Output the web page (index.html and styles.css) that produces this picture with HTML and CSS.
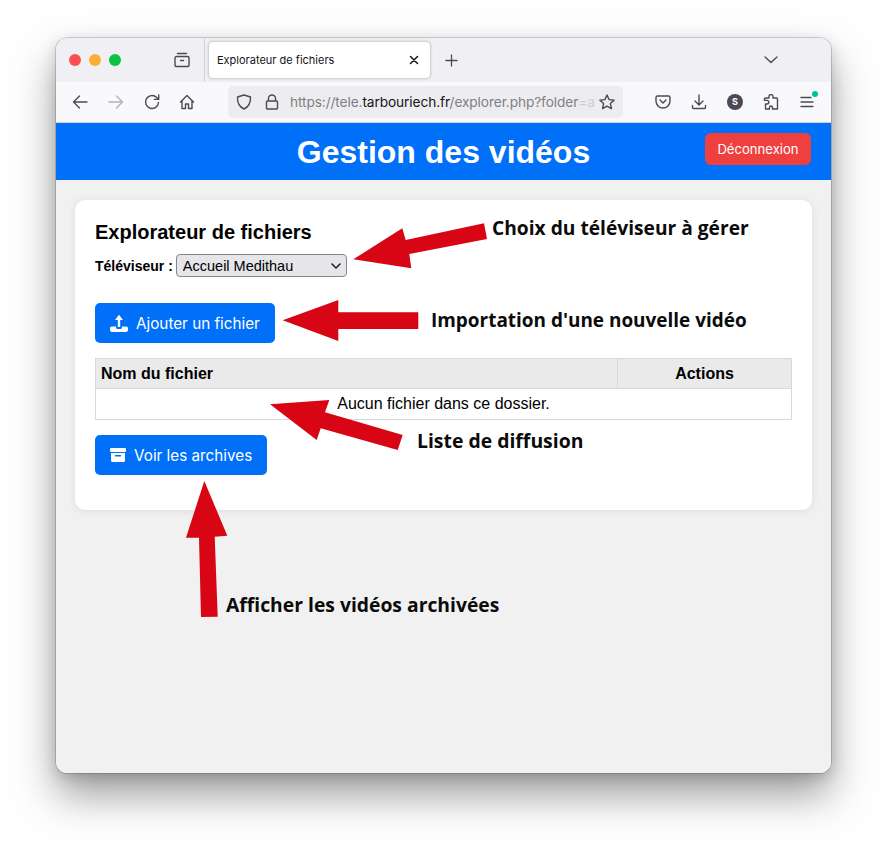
FILE: index.html
```html
<!DOCTYPE html>
<html lang="fr">
<head>
<meta charset="utf-8">
<title>Explorateur de fichiers</title>
<link rel="stylesheet" href="styles.css">
</head>
<body>
<div class="window">
  <div class="tabbar">
    <div class="lights"><span class="light red"></span><span class="light yellow"></span><span class="light green"></span></div>
    <svg class="ico tabs-ico" viewBox="0 0 16 16"><path d="M3.500 1.500h9M1 6a1.500 1.500 0 0 1 1.500-1.500h11A1.500 1.500 0 0 1 15 6v7.500a1 1 0 0 1-1 1H2a1 1 0 0 1-1-1zM6.500 8.500h3"/></svg>
    <div class="tab-sep"></div>
    <div class="tab"><span class="tab-title">Explorateur de fichiers</span>
      <svg class="ico tab-close" viewBox="0 0 10 10"><path d="M1.500 1.500l7 7M8.500 1.500l-7 7"/></svg>
    </div>
    <svg class="ico newtab" viewBox="0 0 14 14"><path d="M7 1v12M1 7h12"/></svg>
    <svg class="ico chevron" viewBox="0 0 14 8"><path d="M1 1l6 5.500L13 1"/></svg>
  </div>
  <div class="navbar">
    <svg class="ico nav-ico" viewBox="0 0 16 16"><path d="M15 8H1.500M7.500 2L1.500 8l6 6"/></svg>
    <svg class="ico nav-ico dim" viewBox="0 0 16 16"><path d="M1 8h13.500M8.500 2l6 6-6 6"/></svg>
    <svg class="ico nav-ico" viewBox="0 0 16 16"><path d="M14.500 8.500A6.500 6.500 0 1 1 12.500 3.300L14.500 5.200M14.700 1v4.400h-4.400"/></svg>
    <svg class="ico nav-ico home" viewBox="0 0 16 16"><path d="M1.500 8L8 1.500 14.500 8M3 6.800v7.700h3.500v-4.500h3v4.500H13V6.800"/></svg>
    <div class="urlbar">
      <svg class="ico shield" viewBox="0 0 16 16"><path d="M8 1l6.500 2c.3 5.500-1.800 9.800-6.500 12C3.300 12.800 1.200 8.500 1.500 3z"/></svg>
      <svg class="ico lock" viewBox="0 0 14 16"><path d="M3.500 7V4.500a3.500 3.500 0 0 1 7 0V7M2.500 7h9a1 1 0 0 1 1 1v6a1 1 0 0 1-1 1h-9a1 1 0 0 1-1-1V8a1 1 0 0 1 1-1z"/></svg>
      <span class="url"><span class="url-dim">https://tele.</span>tarbouriech.fr<span class="url-dim">/explorer.php?folder</span><span class="url-fade">=a</span></span>
      <svg class="ico star" viewBox="0 0 16 16"><path d="M8 1l2.100 4.600 5 .6-3.700 3.400 1 5L8 12.100l-4.400 2.500 1-5L.9 6.200l5-.6z"/></svg>
    </div>
    <div class="nav-right">
      <svg class="ico nav-ico" viewBox="0 0 16 16"><path d="M2.500 2h11A1.500 1.500 0 0 1 15 3.500V7A7 7 0 0 1 1 7V3.500A1.500 1.500 0 0 1 2.500 2zM5 6l3 3 3-3"/></svg>
      <svg class="ico nav-ico" viewBox="0 0 16 16"><path d="M8 1v9.500M4 7l4 4 4-4M1.500 11.500v2a1 1 0 0 0 1 1h11a1 1 0 0 0 1-1v-2" /></svg>
      <span class="avatar">S</span>
      <svg class="ico nav-ico" viewBox="0 0 16 16"><path d="M6 2.500a2 2 0 0 1 4 0V4h3.500a1 1 0 0 1 1 1v10h-5v-1.500a1.500 1.500 0 0 0-3 0V15H2.500V10H4a1.800 1.800 0 0 0 0-3.600H1.500V5a1 1 0 0 1 1-1H6z"/></svg>
      <span class="menu-wrap">
        <svg class="ico nav-ico" viewBox="0 0 16 16"><path d="M2 3.500h10M2 8h12M2 12.500h12"/></svg>
        <span class="badge"></span>
      </span>
    </div>
  </div>
  <header class="site-header">
    <h1>Gestion des vidéos</h1>
    <a class="logout">Déconnexion</a>
  </header>
  <main class="page">
    <section class="card">
      <h2>Explorateur de fichiers</h2>
      <div class="tv-row">
        <label class="tv-label" for="tv">Téléviseur :</label>
        <span class="select-wrap">
          <select id="tv" class="tv-select"><option>Accueil Medithau</option></select>
          <svg class="ico select-arrow" viewBox="0 0 10 6"><path d="M1 1l4 4 4-4"/></svg>
        </span>
      </div>
      <a class="btn btn-add">
        <svg class="btn-ico" viewBox="0 0 18 18"><path d="M7.800 13V6H5L9 .8 13 6h-2.800v7z"/><path d="M0 14.200c0-1 .8-1.800 1.800-1.800H6v.8c0 1 .8 1.800 1.800 1.800h2.400c1 0 1.800-.8 1.800-1.800v-.8h4.200c1 0 1.800.8 1.800 1.800v1.900c0 1-.8 1.800-1.800 1.800H1.800c-1 0-1.800-.8-1.800-1.800z"/></svg>
        Ajouter un fichier
      </a>
      <table class="files">
        <thead><tr><th class="col-name">Nom du fichier</th><th class="col-actions">Actions</th></tr></thead>
        <tbody><tr><td colspan="2">Aucun fichier dans ce dossier.</td></tr></tbody>
      </table>
      <a class="btn btn-arch">
        <svg class="btn-ico arch" viewBox="0 0 16 14"><path d="M1 0h14a1 1 0 0 1 1 1v2a1 1 0 0 1-1 1H1a1 1 0 0 1-1-1V1a1 1 0 0 1 1-1z"/><path fill-rule="evenodd" d="M1 5h14v7.500a1.500 1.500 0 0 1-1.500 1.500h-11A1.500 1.500 0 0 1 1 12.500zM5.500 7a.5.5 0 0 0 0 1.500h5a.5.5 0 0 0 0-1.500z"/></svg>
        Voir les archives
      </a>
    </section>
  </main>
</div>
<div class="notes">
  <svg class="arrows" viewBox="0 0 887 847">
    <polygon points="353.300,259.300 402.300,228.300 405.700,240 484,223.300 487,239 409.300,254 411.300,268.300"/>
    <polygon points="282.700,320.300 338.300,300 338.300,312.300 418.300,312.300 418.300,329 338.300,329 338.300,341"/>
    <polygon points="270,404.300 329.300,400 325,412.300 402.700,435 397.700,450 320.700,428.300 316.700,440"/>
    <polygon points="204.300,481 227.300,535.700 214.700,536.700 217.700,616.700 201,617 199,537.700 186,537.700"/>
  </svg>
  <span class="note n1">Choix du téléviseur à gérer</span>
  <span class="note n2">Importation d'une nouvelle vidéo</span>
  <span class="note n3">Liste de diffusion</span>
  <span class="note n4">Afficher les vidéos archivées</span>
</div>
</body>
</html>
```
FILE: styles.css
```css
* { box-sizing: border-box; }
html, body { margin: 0; height: 100%; }
body {
  background: #fefefe;
  padding: 38px 56px 74px;
  font-family: "Liberation Sans", Arial, sans-serif;
  overflow: hidden;
  position: relative;
}
.window {
  width: 775px;
  height: 735px;
  border-radius: 11px;
  overflow: hidden;
  display: flex;
  flex-direction: column;
  box-shadow: 0 0 0 .5px rgba(0,0,0,.3), 0 22px 40px rgba(0,0,0,.38), 0 4px 14px rgba(0,0,0,.16);
  background: #f1f1f1;
}
.ico { fill: none; stroke: #4b4a54; stroke-width: 1.400; stroke-linecap: round; stroke-linejoin: round; flex: none; display: block; }

.tabbar { height: 44px; background: #f0f0f4; display: flex; align-items: center; flex: none; }
.lights { display: flex; gap: 8px; margin-left: 13px; }
.light { width: 12px; height: 12px; border-radius: 50%; }
.red { background: #fb5050; }
.yellow { background: #fbaf36; }
.green { background: #0cc243; }
.tabs-ico { width: 16px; height: 16px; margin-left: 53px; }
.tab-sep { width: 1px; height: 44px; background: #cfcfd4; margin-left: 14px; }
.tab {
  width: 221px; height: 36px; margin-left: 4px;
  background: #fff; border-radius: 4px;
  box-shadow: 0 0 3px rgba(0,0,0,.35);
  display: flex; align-items: center; justify-content: space-between;
  padding: 0 11px 0 8px;
}
.tab-title { font: 11px Inter, "Liberation Sans", sans-serif; color: #15141a; }
.tab-close { width: 10px; height: 10px; stroke: #15141a; stroke-width: 1.500; }
.newtab { width: 13px; height: 13px; margin-left: 15px; }
.chevron { width: 14px; height: 8px; margin-left: 306px; }

.navbar { height: 41px; background: #f9f9fb; border-bottom: 1px solid #cfcfd3; display: flex; align-items: center; flex: none; padding: 0 16px 0 16px; }
.nav-ico { width: 16px; height: 16px; }
.navbar > .nav-ico { margin-right: 20px; }
.navbar > .dim { stroke: #b3b2b8; }
.navbar > .home { margin-right: 0; margin-left: -1px; }
.urlbar { width: 395px; height: 32px; margin-left: 33px; background: #ededf0; border-radius: 5px; display: flex; align-items: center; padding-left: 8px; }
.shield { width: 16px; height: 16px; }
.lock { width: 14px; height: 16px; margin-left: 13px; }
.url { font: 13.700px Inter, "Liberation Sans", sans-serif; color: #15141a; margin-left: 11px; width: 301px; white-space: nowrap; letter-spacing: -.1px; }
.url-dim { color: #7f7f85; }
.url-fade { color: #cfcfd3; }
.star { width: 16px; height: 16px; margin-left: 8px; }
.nav-right { display: flex; align-items: center; gap: 20px; margin-left: 32px; }
.avatar { width: 16px; height: 16px; border-radius: 50%; background: #4b4a54; color: #fff; font: bold 9px/16px Inter, sans-serif; text-align: center; }
.menu-wrap { position: relative; display: block; }
.badge { position: absolute; top: -3px; right: -3px; width: 6px; height: 6px; border-radius: 50%; background: #00c29a; }

.site-header { height: 57px; background: #0070f9; display: grid; grid-template-columns: 1fr auto 1fr; align-items: center; flex: none; padding: 0 20px; }
.site-header h1 { grid-column: 2; margin: 1px 0 0; color: #fff; font-size: 32px; font-weight: 700; }
.logout { grid-column: 3; justify-self: end; width: 106px; height: 32px; margin-top: -5px; background: #ef4040; color: #fff; border-radius: 6px; font: 13.100px/32px Inter, "Liberation Sans", sans-serif; text-align: center; }

.page { flex: 1; background: #f1f1f1; padding: 20px 19px; }
.card { background: #fff; border-radius: 10px; height: 310px; padding: 20px; box-shadow: 0 1px 8px rgba(0,0,0,.09); }
.card h2 { margin: 0; font-size: 20px; line-height: 24px; color: #000; }
.tv-row { display: flex; align-items: center; gap: 3px; margin-top: 10px; height: 23px; }
.tv-label { font-size: 14px; font-weight: 700; }
.select-wrap { position: relative; display: block; width: 171px; height: 23px; }
.tv-select { appearance: none; width: 100%; height: 100%; font: 14.500px "Liberation Sans", sans-serif; color: #000; background: #e5e5ea; border: 1px solid #85858d; border-radius: 4px; padding: 0 0 0 6px; margin: 0; }
.select-arrow { position: absolute; right: 6px; top: 9px; width: 10px; height: 6px; stroke: #222; stroke-width: 1.600; pointer-events: none; }
.btn { display: flex; align-items: center; height: 40px; background: #0070f9; color: #fff; border-radius: 5px; font: 15.250px Inter, "Liberation Sans", sans-serif; }
.btn-ico { fill: #fff; display: block; flex: none; }
.btn-add { width: 180px; margin-top: 26px; padding-left: 15px; gap: 8px; }
.btn-add .btn-ico { width: 18px; height: 18px; }
.btn-arch { width: 172px; margin-top: 15px; padding-left: 15px; gap: 8px; }
.btn-arch .btn-ico.arch { width: 16px; height: 14px; }
.files { border-collapse: collapse; width: 697px; margin-top: 15px; font-size: 16px; color: #000; table-layout: fixed; }
.files th, .files td { border: 1px solid #d9d9d9; padding: 0 5px; }
.files th { background: #eaeaea; height: 30px; }
.files td { height: 31px; text-align: center; padding-bottom: 1px; }
.col-name { text-align: left; width: 522px; }
.col-actions { text-align: center; }

.notes { position: absolute; left: 0; top: 0; width: 887px; height: 847px; pointer-events: none; }
.arrows { position: absolute; inset: 0; width: 887px; height: 847px; display: block; }
.arrows polygon { fill: #d80515; }
.note { position: absolute; font: 700 19.200px/24px "Open Sans", sans-serif; color: #0b0b0b; white-space: nowrap; }
.n1 { left: 492px; top: 216px; }
.n2 { left: 431px; top: 308px; font-size: 18.950px; }
.n3 { left: 417px; top: 429px; font-size: 19.400px; }
.n4 { left: 226px; top: 593px; font-size: 19.320px; }
```
